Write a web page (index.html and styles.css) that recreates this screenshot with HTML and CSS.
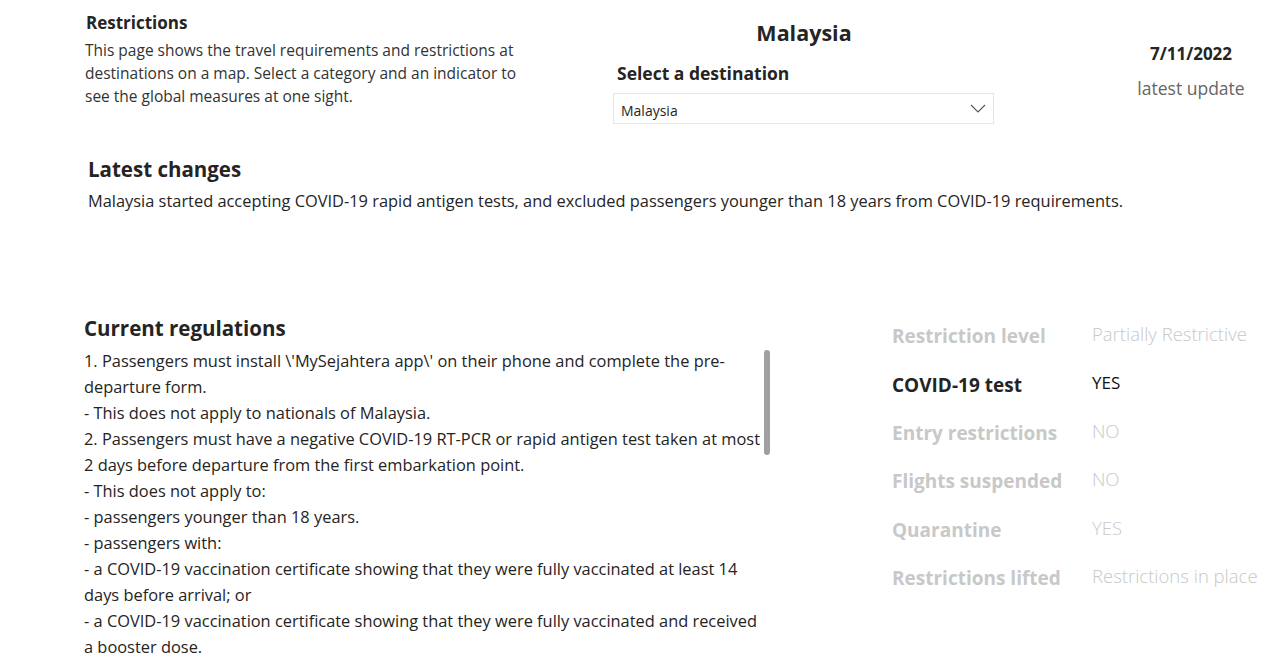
FILE: index.html
```html
<!DOCTYPE html>
<html lang="en">
<head>
<meta charset="utf-8">
<title>Restrictions - Malaysia</title>
<link rel="stylesheet" href="styles.css">
</head>
<body>
<div class="page">
  <header class="top">
    <section class="intro">
      <h1 class="intro-title">Restrictions</h1>
      <p class="intro-text">This page shows the travel requirements and restrictions at destinations on a map. Select a category and an indicator to see the global measures at one sight.</p>
    </section>
    <section class="picker">
      <h2 class="country">Malaysia</h2>
      <div class="picker-label">Select a destination</div>
      <div class="select">
        <span class="select-value">Malaysia</span>
        <svg class="chevron" width="16" height="9" viewBox="0 0 16 9"><path d="M1 1 L8 8 L15 1" fill="none" stroke="#555" stroke-width="1.1"/></svg>
      </div>
    </section>
    <section class="update">
      <div class="update-date">7/11/2022</div>
      <div class="update-label">latest update</div>
    </section>
  </header>

  <section class="changes">
    <h2 class="section-title">Latest changes</h2>
    <p class="changes-text">Malaysia started accepting COVID-19 rapid antigen tests, and excluded passengers younger than 18 years from COVID-19 requirements.</p>
  </section>

  <section class="bottom">
    <div class="regs">
      <h2 class="section-title regs-title">Current regulations</h2>
      <div class="regs-box">
        <div class="regs-text">
          <p>1. Passengers must install \'MySejahtera app\' on their phone and complete the pre-departure form.</p>
          <p>- This does not apply to nationals of Malaysia.</p>
          <p>2. Passengers must have a negative COVID-19 RT-PCR or rapid antigen test taken at most 2 days before departure from the first embarkation point.</p>
          <p>- This does not apply to:</p>
          <p>- passengers younger than 18 years.</p>
          <p>- passengers with:</p>
          <p>- a COVID-19 vaccination certificate showing that they were fully vaccinated at least 14 days before arrival; or</p>
          <p>- a COVID-19 vaccination certificate showing that they were fully vaccinated and received a booster dose.</p>
        </div>
        <div class="scroll-thumb"></div>
      </div>
    </div>
    <div class="indicators">
      <div class="ind-row"><span class="ind-label">Restriction level</span><span class="ind-value">Partially Restrictive</span></div>
      <div class="ind-row active"><span class="ind-label">COVID-19 test</span><span class="ind-value">YES</span></div>
      <div class="ind-row"><span class="ind-label">Entry restrictions</span><span class="ind-value">NO</span></div>
      <div class="ind-row"><span class="ind-label">Flights suspended</span><span class="ind-value">NO</span></div>
      <div class="ind-row"><span class="ind-label">Quarantine</span><span class="ind-value">YES</span></div>
      <div class="ind-row"><span class="ind-label">Restrictions lifted</span><span class="ind-value">Restrictions in place</span></div>
    </div>
  </section>
</div>
</body>
</html>
```
FILE: styles.css
```css
* { box-sizing: border-box; }
html, body { margin: 0; padding: 0; background: #fff; }
body {
  font-family: "Open Sans", "Noto Sans", sans-serif;
  color: #252423;
  width: 1288px;
  height: 663px;
  overflow: hidden;
}
h1, h2, p { margin: 0; }

.top {
  display: flex;
  align-items: flex-start;
  height: 150px;
}
.intro {
  margin-left: 85px;
  width: 450px;
  padding-top: 12px;
}
.intro-title {
  font-size: 17px;
  line-height: 22px;
  font-weight: 700;
  color: #252423;
  padding-left: 1px;
}
.intro-text {
  margin-top: 5px;
  font-size: 15.5px;
  line-height: 23px;
  color: #333;
}
.picker {
  margin-left: 78px;
  width: 381px;
  padding-top: 18px;
}
.country {
  text-align: center;
  font-size: 21.5px;
  line-height: 30px;
  font-weight: 700;
  color: #252423;
  padding-left: 1px;
}
.picker-label {
  margin-top: 13px;
  padding-left: 4px;
  font-size: 17.5px;
  line-height: 24px;
  font-weight: 700;
  color: #252423;
}
.select {
  margin-top: 8px;
  height: 31px;
  border: 1px solid #e6e6e6;
  display: flex;
  align-items: center;
  justify-content: space-between;
  padding: 3px 7px 0 7px;
}
.select-value {
  font-size: 14px;
  color: #252423;
}
.chevron { margin-top: -3px; }
.update {
  margin-left: 117px;
  width: 160px;
  padding-top: 42px;
  text-align: center;
}
.update-date {
  font-size: 17px;
  line-height: 24px;
  font-weight: 700;
  color: #252423;
}
.update-label {
  margin-top: 9px;
  font-size: 17.5px;
  line-height: 26px;
  color: #666;
}

.changes {
  padding-left: 88px;
  margin-top: 5px;
}
.section-title {
  font-size: 20.5px;
  line-height: 28px;
  font-weight: 700;
  color: #252423;
}
.changes-text {
  margin-top: 7px;
  font-size: 16.4px;
  line-height: 22px;
  color: #252423;
}

.bottom {
  display: flex;
  margin-top: 102px;
}
.regs {
  margin-left: 84px;
  width: 700px;
}
.regs-box {
  position: relative;
  margin-top: 6px;
  height: 320px;
  overflow: hidden;
}
.regs-text {
  width: 678px;
  font-size: 16.4px;
  line-height: 26px;
  color: #252423;
}
.scroll-thumb {
  position: absolute;
  left: 680px;
  top: 2px;
  width: 6px;
  height: 105px;
  border-radius: 3px;
  background: #a0a0a0;
}
.indicators {
  margin-left: 108px;
  margin-top: -2px;
}
.ind-row {
  display: grid;
  grid-template-columns: 200px auto;
  height: 48.4px;
  align-items: center;
}
.ind-label {
  font-size: 19px;
  font-weight: 700;
  color: #c8c8c8;
}
.ind-value {
  font-size: 18.5px;
  font-weight: 300;
  color: #c8c8c8;
  margin-top: -5px;
}
.ind-row.active .ind-label { color: #252423; }
.ind-row.active .ind-value { color: #111; font-weight: 400; font-size: 17px; }
```
